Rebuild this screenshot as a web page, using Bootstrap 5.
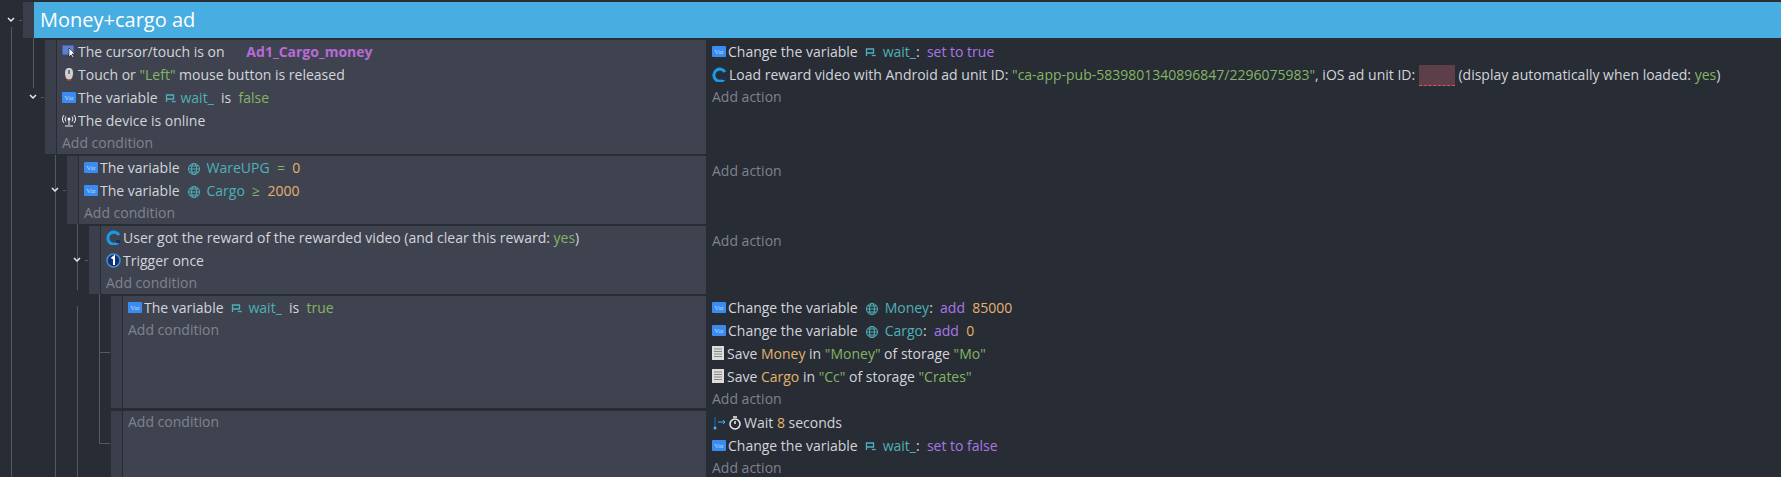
<!doctype html>
<html lang="en"><head><meta charset="utf-8"><title>Money+cargo ad</title>
<link href="https://cdn.jsdelivr.net/npm/bootstrap@5.3.0/dist/css/bootstrap.min.css" rel="stylesheet">
<style>
html,body{height:477px;overflow:hidden}
body{background:#282c35;font-family:"Open Sans","Noto Sans",sans-serif;font-size:14px;color:#d2d5db;position:relative}
.sheet{padding-top:2px}
.grp-row{height:36px;margin-left:23px;margin-bottom:2px}
.hnd{width:11px;background:#3b3f4c;flex:none}
.grp-title{background:#48aee2;color:#fff;font-size:20px;padding-left:6px;line-height:36px}
.ev-row{margin-bottom:2px}
.ev-left{width:706px;flex:none}
.ev-cond{background:#3f4350;padding-left:5px;border-left:1px solid #282c35}
.ev-act{padding-left:6px}
.ln{height:23px;line-height:23px;white-space:nowrap;display:flex;align-items:center}
.ln svg{flex:none;margin-right:2px}
.add{height:21px;line-height:21px;color:#7f838c}
.h-114{height:114px}.h-68{height:68px}.h-112{height:112px}.h-66{height:66px}
.in45{padding-left:45px}.in67{padding-left:67px}.in89{padding-left:89px}.in111{padding-left:111px}
.act-hnd{width:0}
.sp{white-space:pre}
.cv{color:#4eb0b8}.cg{color:#84b564}.co{color:#e3b26c}.cp{color:#a877e6}.cm{color:#b86ad8;font-weight:700}
.bad{display:inline-block;width:36px;height:21px;background:#5c3f48;border-bottom:1px dashed #e0506a}
.tree{position:absolute;left:0;top:0;pointer-events:none}
</style></head><body>
<svg width="0" height="0" class="d-block"><defs>
<symbol id="v" viewBox="0 0 14 11"><rect width="14" height="11" rx="1" fill="#3b8cf2"/><text x="7" y="8.2" font-size="7" text-anchor="middle" fill="#bcd8fb" font-family="Liberation Serif">Var</text></symbol>
<symbol id="g" viewBox="0 0 14 14"><g fill="none" stroke="#4eb0b8" stroke-width="1"><circle cx="7" cy="7" r="5.5"/><ellipse cx="7" cy="7" rx="2.5" ry="5.5"/><path d="M1.5 7h11M2.5 4h9M2.5 10h9"/></g></symbol>
<symbol id="s" viewBox="0 0 12 12"><g fill="none" stroke="#4eb0b8" stroke-width="1.3"><path d="M1.5 9V2h7v4h-7"/><path d="M7 9c1-2 2 1 3.500-1"/></g></symbol>
<symbol id="a" viewBox="0 0 15 15"><path d="M12 12.500A6 6 0 1 1 13 5" fill="none" stroke="#1a9be8" stroke-width="3"/><rect x="10" y="10" width="4" height="3" fill="#17306b"/></symbol>
</defs></svg>
<div class="sheet">
 <div class="grp-row d-flex"><div class="hnd"></div><div class="grp-title flex-grow-1">Money+cargo ad</div></div>

 <div class="ev-row d-flex">
  <div class="ev-left in45 d-flex h-114"><div class="hnd"></div><div class="ev-cond flex-grow-1">
   <div class="ln"><svg width="14" height="14" viewBox="0 0 14 14"><rect y="0" width="12" height="10" fill="#5c7fd0" stroke="#34477c"/><path d="M7 3v9l2-2 2 3 1-1-2-3h3z" fill="#fff" stroke="#111" stroke-width=".6"/></svg><span class="sp">The cursor/touch is on      <span class="cm">Ad1_Cargo_money</span></span></div>
   <div class="ln"><svg width="14" height="15" viewBox="0 0 14 15"><path d="M7 1c3 0 4 2 4 5s-1 7-4 7-4-4-4-7 1-5 4-5z" fill="#cfcfcf"/><rect x="6" y="3" width="2" height="4" fill="#777"/><path d="M5 13h4" stroke="#c33" stroke-width="1.500"/></svg><span>Touch or <span class="cg">"Left"</span> mouse button is released</span></div>
   <div class="ln"><svg width="14" height="11"><use href="#v"/></svg><span class="sp">The variable  <svg width="12" height="12" class="align-middle me-0"><use href="#s"/></svg> <span class="cv">wait_</span>  is  <span class="cg">false</span></span></div>
   <div class="ln"><svg width="14" height="13" viewBox="0 0 14 13"><circle cx="7" cy="5" r="1.500" fill="#eee"/><path d="M7 6v5M3 12h8M4 2.500a4 4 0 0 0 0 5M10 2.500a4 4 0 0 1 0 5M2 1a6.500 6.500 0 0 0 0 8M12 1a6.500 6.500 0 0 1 0 8" stroke="#eee" fill="none"/></svg><span>The device is online</span></div>
   <div class="add">Add condition</div>
  </div></div>
  <div class="ev-act flex-grow-1">
   <div class="ln"><svg width="14" height="11"><use href="#v"/></svg><span class="sp">Change the variable  <svg width="12" height="12" class="align-middle"><use href="#s"/></svg> <span class="cv">wait_</span>:  <span class="cp">set to true</span></span></div>
   <div class="ln"><svg width="15" height="15"><use href="#a"/></svg><span class="sp">Load reward video with Android ad unit ID: <span class="cg">"ca-app-pub-5839801340896847/2296075983"</span>, iOS ad unit ID: <span class="bad align-middle"></span> (display automatically when loaded: <span class="cg">yes</span>)</span></div>
   <div class="add">Add action</div>
  </div>
 </div>

 <div class="ev-row d-flex">
  <div class="ev-left in67 d-flex h-68"><div class="hnd"></div><div class="ev-cond flex-grow-1">
   <div class="ln"><svg width="14" height="11"><use href="#v"/></svg><span class="sp">The variable  <svg width="14" height="14" class="align-middle"><use href="#g"/></svg> <span class="cv">WareUPG</span>  <span class="cg">=</span>  <span class="co">0</span></span></div>
   <div class="ln"><svg width="14" height="11"><use href="#v"/></svg><span class="sp">The variable  <svg width="14" height="14" class="align-middle"><use href="#g"/></svg> <span class="cv">Cargo</span>  <span class="cg">≥</span>  <span class="co">2000</span></span></div>
   <div class="add">Add condition</div>
  </div></div>
  <div class="ev-act flex-grow-1"><div class="add mt-1">Add action</div></div>
 </div>

 <div class="ev-row d-flex">
  <div class="ev-left in89 d-flex h-68"><div class="hnd"></div><div class="ev-cond flex-grow-1">
   <div class="ln"><svg width="15" height="15"><use href="#a"/></svg><span>User got the reward of the rewarded video (and clear this reward: <span class="cg">yes</span>)</span></div>
   <div class="ln"><svg width="15" height="15" viewBox="0 0 15 15"><circle cx="7.500" cy="7.500" r="6.500" fill="#17306b" stroke="#3f8fe0" stroke-width="1.500"/><path d="M5.500 5.500 8 3.500V12" stroke="#fff" stroke-width="2" fill="none"/></svg><span>Trigger once</span></div>
   <div class="add">Add condition</div>
  </div></div>
  <div class="ev-act flex-grow-1"><div class="add mt-1">Add action</div></div>
 </div>

 <div class="ev-row d-flex">
  <div class="ev-left in111 d-flex h-112"><div class="hnd"></div><div class="ev-cond flex-grow-1">
   <div class="ln"><svg width="14" height="11"><use href="#v"/></svg><span class="sp">The variable  <svg width="12" height="12" class="align-middle"><use href="#s"/></svg> <span class="cv">wait_</span>  is  <span class="cg">true</span></span></div>
   <div class="add">Add condition</div>
  </div></div>
  <div class="ev-act flex-grow-1">
   <div class="ln"><svg width="14" height="11"><use href="#v"/></svg><span class="sp">Change the variable  <svg width="14" height="14" class="align-middle"><use href="#g"/></svg> <span class="cv">Money</span>:  <span class="cp">add</span>  <span class="co">85000</span></span></div>
   <div class="ln"><svg width="14" height="11"><use href="#v"/></svg><span class="sp">Change the variable  <svg width="14" height="14" class="align-middle"><use href="#g"/></svg> <span class="cv">Cargo</span>:  <span class="cp">add</span>  <span class="co">0</span></span></div>
   <div class="ln"><svg width="13" height="15" viewBox="0 0 13 15"><rect width="12" height="14" fill="#ddd"/><path d="M2 3h8M2 5.500h8M2 8h8M2 10.500h8" stroke="#888"/></svg><span>Save <span class="co">Money</span> in <span class="cg">"Money"</span> of storage <span class="cg">"Mo"</span></span></div>
   <div class="ln"><svg width="13" height="15" viewBox="0 0 13 15"><rect width="12" height="14" fill="#ddd"/><path d="M2 3h8M2 5.500h8M2 8h8M2 10.500h8" stroke="#888"/></svg><span>Save <span class="co">Cargo</span> in <span class="cg">"Cc"</span> of storage <span class="cg">"Crates"</span></span></div>
   <div class="add">Add action</div>
  </div>
 </div>

 <div class="ev-row d-flex">
  <div class="ev-left in111 d-flex h-66"><div class="hnd"></div><div class="ev-cond flex-grow-1">
   <div class="add">Add condition</div>
  </div></div>
  <div class="ev-act flex-grow-1">
   <div class="ln"><svg width="14" height="14" viewBox="0 0 14 14"><path d="M3 1v11" stroke="#1a6fd0"/><circle cx="3" cy="12" r="1.500" fill="#3bb8f0"/><path d="M6 6h7M11 4l2 2-2 2" stroke="#3bb8f0" fill="none"/></svg><svg width="14" height="14" viewBox="0 0 14 14"><circle cx="7" cy="8" r="5" fill="none" stroke="#eee" stroke-width="1.500"/><path d="M5 1h4M7 8V5" stroke="#eee" stroke-width="1.500"/></svg><span>Wait <span class="co">8</span> seconds</span></div>
   <div class="ln"><svg width="14" height="11"><use href="#v"/></svg><span class="sp">Change the variable  <svg width="12" height="12" class="align-middle"><use href="#s"/></svg> <span class="cv">wait_</span>:  <span class="cp">set to false</span></span></div>
   <div class="add">Add action</div>
  </div>
 </div>
</div>
<svg class="tree" width="130" height="477" fill="none" stroke="#555963">
 <path d="M11.500 27V477M33.500 38V88M55.500 155V477M77.500 224V290M99.500 294V443.500H110M99.500 352.500H110M77.500 306V477"/>
 <g stroke="#e8eaee" stroke-width="1.500"><path d="M8 18l3 3 3-3M30 95l3 3 3-3M52 188l3 3 3-3M74 258l3 3 3-3"/></g>
 <path d="M19 20.500h3M41 97.500h3M63 190.500h3M85 260.500h3"/>
</svg>
</body></html>
